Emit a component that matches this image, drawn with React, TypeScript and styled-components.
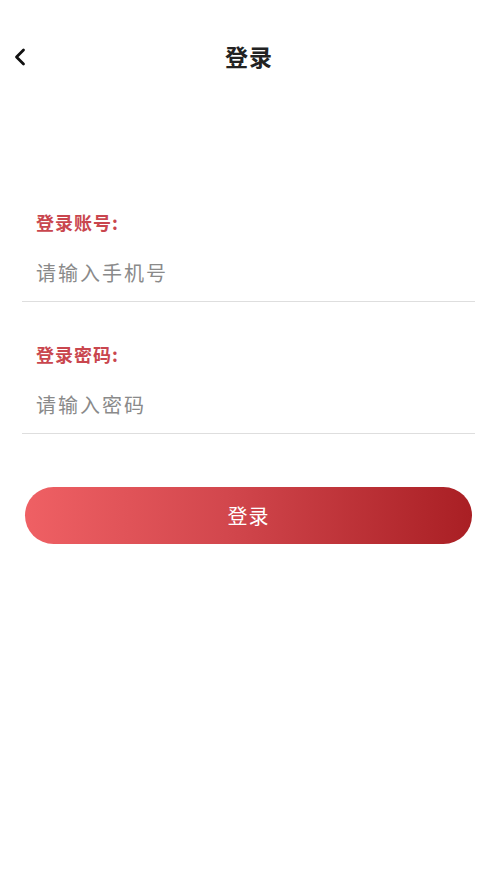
import { createGlobalStyle, styled } from "styled-components";

const GlobalStyle = createGlobalStyle`
  * {
    box-sizing: border-box;
  }
  body {
    margin: 0;
    background: #fff;
    font-family: "Noto Sans CJK SC", "Noto Sans", sans-serif;
  }
`;

const Page = styled.div`
  width: 100%;
  min-height: 883px;
  background: #fff;
`;

const Header = styled.header`
  height: 116px;
  padding-bottom: 4px;
  position: relative;
  display: flex;
  align-items: center;
  justify-content: center;
`;

const Back = styled.button`
  position: absolute;
  left: 8px;
  top: 43px;
  width: 24px;
  height: 28px;
  padding: 0;
  border: none;
  background: none;
  display: flex;
  align-items: center;
  justify-content: center;
  cursor: pointer;
`;

const Title = styled.h1`
  margin: 0;
  font-size: 23px;
  font-weight: 700;
  color: #222;
  letter-spacing: 1px;
  padding-left: 1px;
`;

const Form = styled.form`
  padding: 94px 22px 0;
`;

const Label = styled.label<{ $first?: boolean }>`
  display: block;
  margin: ${(p) => (p.$first ? "0" : "40px")} 0 0 14px;
  line-height: 24px;
  font-size: 18px;
  font-weight: 700;
  letter-spacing: 1px;
  color: #c9464e;
`;

const Input = styled.input`
  display: block;
  width: 100%;
  padding: 24px 14px 15px;
  line-height: 28px;
  height: 68px;
  border: none;
  border-bottom: 1px solid #dedede;
  outline: none;
  font-family: inherit;
  font-size: 20px;
  letter-spacing: 2px;
  color: #333;
  background: transparent;

  &::placeholder {
    color: #8a8a8a;
  }
`;

const Submit = styled.button`
  display: block;
  width: calc(100% - 6px);
  margin: 53px 3px 0;
  height: 57px;
  border: none;
  border-radius: 29px;
  background: linear-gradient(90deg, #ef6064 0%, #d2474d 45%, #a91f24 100%);
  color: #fff;
  font-family: inherit;
  font-size: 20px;
  letter-spacing: 1px;
  cursor: pointer;
`;

const ChevronLeft = () => (
  <svg width="14" height="18" viewBox="0 0 14 18" fill="none">
    <polyline points="10.5,2 3.5,9 10.5,16" stroke="#111" strokeWidth="2.8" strokeLinecap="round" strokeLinejoin="round" />
  </svg>
);

export default function App() {
  return (
    <Page>
      <GlobalStyle />
      <Header>
        <Back type="button" aria-label="返回">
          <ChevronLeft />
        </Back>
        <Title>登录</Title>
      </Header>
      <Form onSubmit={(e) => e.preventDefault()}>
        <Label $first>登录账号:</Label>
        <Input type="tel" placeholder="请输入手机号" />
        <Label>登录密码:</Label>
        <Input type="password" placeholder="请输入密码" />
        <Submit type="submit">登录</Submit>
      </Form>
    </Page>
  );
}
